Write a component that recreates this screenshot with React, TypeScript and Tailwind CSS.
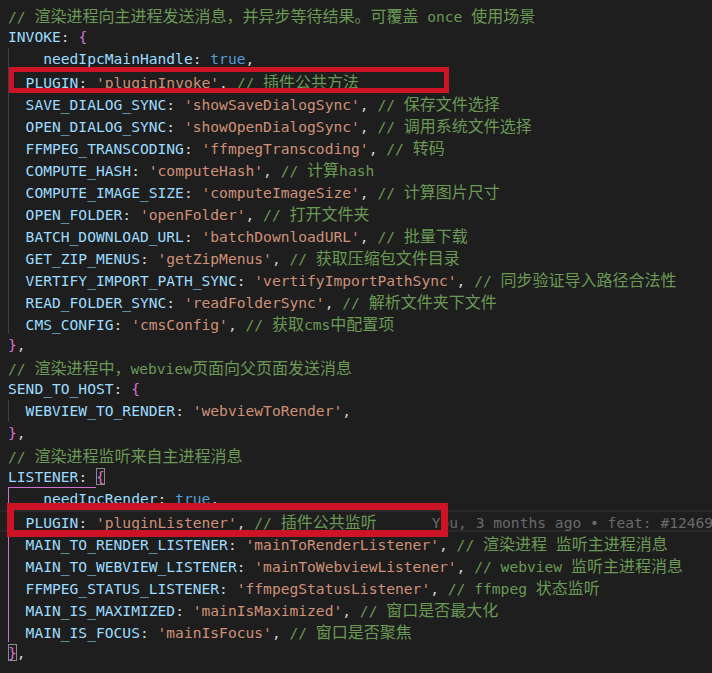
import React from 'react';

const K = '#9cdcfe';
const S = '#ce9178';
const P = '#d4d4d4';
const C = '#6a9955';
const B = '#da70d6';
const T = '#569cd6';

type Tok = [string, string];

const CJK = /([\u3000-\u303f\u4e00-\u9fff\uff00-\uffef]+)/;

function Run({ text, color }: { text: string; color: string }) {
  const parts = text.split(CJK).filter((p) => p.length > 0);
  return (
    <>
      {parts.map((p, i) =>
        CJK.test(p) ? (
          <span key={i} style={{ color }} className="font-['Noto_Sans_CJK_SC',sans-serif] text-[16px]">
            {p}
          </span>
        ) : (
          <span key={i} style={{ color }}>
            {p}
          </span>
        )
      )}
    </>
  );
}

function prop(key: string, val: string, comment?: string): Tok[] {
  const t: Tok[] = [
    [key, K],
    [': ', P],
    [`'${val}'`, S],
    [',', P],
  ];
  if (comment) {
    t.push([' ', P]);
    t.push([`// ${comment}`, C]);
  }
  return t;
}

function Toks({ toks }: { toks: Tok[] }) {
  return (
    <>
      {toks.map(([text, color], i) => (
        <Run key={i} text={text} color={color} />
      ))}
    </>
  );
}

function Line({ children, className = '' }: { children: React.ReactNode; className?: string }) {
  return <div className={`relative h-[22px] whitespace-pre leading-[22px] ${className}`}>{children}</div>;
}

function Indented({ toks, guide, extra, className = '' }: { toks: Tok[]; guide: string; extra?: React.ReactNode; className?: string }) {
  return (
    <Line className={`flex ${className}`}>
      <span className={`h-[22px] w-[17.6px] shrink-0 border-l ${guide}`} />
      <span>
        <Toks toks={toks} />
        {extra}
      </span>
    </Line>
  );
}

const dimGuide = 'border-[#4a3a4c]';
const activeGuide = 'border-[#d070d0]';

const invokeItems: Tok[][] = [
  [
    ['__needIpcMainHandle', K],
    [': ', P],
    ['true', T],
    [',', P],
  ],
  prop('PLUGIN', 'pluginInvoke', '插件公共方法'),
  prop('SAVE_DIALOG_SYNC', 'showSaveDialogSync', '保存文件选择'),
  prop('OPEN_DIALOG_SYNC', 'showOpenDialogSync', '调用系统文件选择'),
  prop('FFMPEG_TRANSCODING', 'ffmpegTranscoding', '转码'),
  prop('COMPUTE_HASH', 'computeHash', '计算hash'),
  prop('COMPUTE_IMAGE_SIZE', 'computeImageSize', '计算图片尺寸'),
  prop('OPEN_FOLDER', 'openFolder', '打开文件夹'),
  prop('BATCH_DOWNLOAD_URL', 'batchDownloadURL', '批量下载'),
  prop('GET_ZIP_MENUS', 'getZipMenus', '获取压缩包文件目录'),
  prop('VERTIFY_IMPORT_PATH_SYNC', 'vertifyImportPathSync', '同步验证导入路径合法性'),
  prop('READ_FOLDER_SYNC', 'readFolderSync', '解析文件夹下文件'),
  prop('CMS_CONFIG', 'cmsConfig', '获取cms中配置项'),
];

const listenerAfter: Tok[][] = [
  prop('MAIN_TO_RENDER_LISTENER', 'mainToRenderListener', '渲染进程 监听主进程消息'),
  prop('MAIN_TO_WEBVIEW_LISTENER', 'mainToWebviewListener', 'webview 监听主进程消息'),
  prop('FFMPEG_STATUS_LISTENER', 'ffmpegStatusListener', 'ffmpeg 状态监听'),
  prop('MAIN_IS_MAXIMIZED', 'mainIsMaximized', '窗口是否最大化'),
  prop('MAIN_IS_FOCUS', 'mainIsFocus', '窗口是否聚焦'),
];

export default function App() {
  return (
    <div className="relative h-[673px] w-[712px] overflow-hidden bg-[#1e1e1e] pl-2 font-['DejaVu_Sans_Mono','Liberation_Mono',monospace] text-[14.62px] text-[#d4d4d4]">
      <Line className="mt-[-18px]">
        <Toks toks={[['}', B], [',', P]]} />
      </Line>
      <Line>
        <Toks toks={[['// 渲染进程向主进程发送消息，并异步等待结果。可覆盖 once 使用场景', C]]} />
      </Line>
      <Line>
        <Toks toks={[['INVOKE', K], [': ', P], ['{', B]]} />
      </Line>
      {invokeItems.map((t, i) => (
        <Indented key={i} toks={t} guide={dimGuide} />
      ))}
      <Line>
        <Toks toks={[['}', B], [',', P]]} />
      </Line>
      <Line>
        <Toks toks={[['// 渲染进程中，webview页面向父页面发送消息', C]]} />
      </Line>
      <Line>
        <Toks toks={[['SEND_TO_HOST', K], [': ', P], ['{', B]]} />
      </Line>
      <Indented toks={prop('WEBVIEW_TO_RENDER', 'webviewToRender')} guide={dimGuide} />
      <Line>
        <Toks toks={[['}', B], [',', P]]} />
      </Line>
      <Line>
        <Toks toks={[['// 渲染进程监听来自主进程消息', C]]} />
      </Line>
      <Line>
        <Toks toks={[['LISTENER', K], [': ', P]]} />
        <span className="text-[#da70d6] shadow-[inset_0_0_0_1px_#8a8a8a]">{'{'}</span>
        <span className="absolute bottom-0 left-0 h-px w-[88px] bg-[#d070d0]" />
      </Line>
      <Indented
        toks={[
          ['__needIpcRender', K],
          [': ', P],
          ['true', T],
          [',', P],
        ]}
        guide={activeGuide}
      />
      <Indented
        toks={prop('PLUGIN', 'pluginListener', '插件公共监听')}
        guide={activeGuide}
        className="-ml-2 pl-2 shadow-[inset_0_2px_0_#282828,inset_0_-2px_0_#282828]"
        extra={<span className="ml-[55px] text-[#6a6a6a]">You, 3 months ago • feat: #12469 插件公共能力</span>}
      />
      {listenerAfter.map((t, i) => (
        <Indented key={i} toks={t} guide={activeGuide} />
      ))}
      <Line>
        <span className="text-[#da70d6] shadow-[inset_0_0_0_1px_#8a8a8a]">{'}'}</span>
        <Run text="," color={P} />
      </Line>

      <div className="pointer-events-none absolute left-[9px] top-[67px] h-[26px] w-[440px] border-[5px] border-[#cd1426]" />
      <div className="pointer-events-none absolute left-[7px] top-[503px] h-[34px] w-[441px] border-[7px] border-[#cd1426]" />
    </div>
  );
}
